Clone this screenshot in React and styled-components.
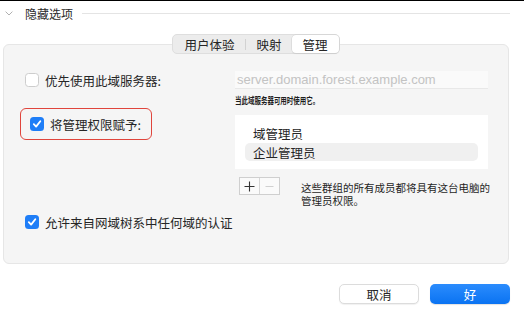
import React from "react";
import styled, { createGlobalStyle } from "styled-components";

const GlobalStyle = createGlobalStyle`
  html, body {
    margin: 0;
    padding: 0;
    background: #ffffff;
  }
  body {
    font-family: "Noto Sans CJK SC", "Liberation Sans", sans-serif;
    color: #262626;
  }
`;

const Window = styled.div`
  width: 524px;
  height: 316px;
  box-sizing: border-box;
  border-top: 1px solid #000;
  background: #fff;
  display: flex;
  flex-direction: column;
`;

const Header = styled.div`
  height: 24px;
  display: flex;
  align-items: center;
  padding: 0 14px 0 5px;
`;

const HeaderTitle = styled.span`
  font-size: 12px;
  margin-left: 12px;
  color: #2a2a2a;
`;

const HeaderRule = styled.div`
  flex: 1;
  height: 1px;
  background: #e4e4e4;
  margin-left: 9px;
`;

const TabsRow = styled.div`
  margin: 9px 15px 0 3px;
  display: flex;
  justify-content: center;
  position: relative;
  z-index: 1;
`;

const Segmented = styled.div`
  display: flex;
  align-items: center;
  height: 20px;
  box-sizing: border-box;
  background: #ececec;
  border: 1px solid #dedede;
  border-radius: 5px;
`;

const Segment = styled.div`
  height: 18px;
  display: flex;
  align-items: center;
  padding: 0 ${(p) => p.$pad || 11}px;
  font-size: 12.5px;
  border-radius: 4px;
  background: ${(p) => (p.$active ? "#fff" : "transparent")};
  box-shadow: ${(p) => (p.$active ? "0 0 0 0.5px #d0d0d0, 0 1px 1px rgba(0,0,0,0.08)" : "none")};
`;

const SegDivider = styled.div`
  width: 1px;
  height: 11px;
  background: #d2d2d2;
`;

const Panel = styled.div`
  margin: -10px 15px 0 3px;
  height: 220px;
  box-sizing: border-box;
  background: #f5f5f5;
  border: 1px solid #e6e6e6;
  border-radius: 6px;
  padding: 26px 0 0 16px;
  display: grid;
  grid-template-columns: 215px 253px;
  align-content: start;
`;

const CheckRow = styled.label`
  display: flex;
  align-items: center;
  gap: 6px;
  height: ${(p) => p.$h || 18}px;
  padding-left: 5px;
  font-size: 12.5px;
  margin-top: ${(p) => p.$mt || 0}px;
  grid-column: ${(p) => (p.$wide ? "1 / span 2" : "auto")};
`;

const Box = styled.span`
  width: 14px;
  height: 14px;
  box-sizing: border-box;
  border-radius: 3.5px;
  flex-shrink: 0;
  display: flex;
  align-items: center;
  justify-content: center;
  background: ${(p) => (p.$checked ? "#1f7ef7" : "#fff")};
  border: ${(p) => (p.$checked ? "none" : "1px solid #cdcdcd")};
`;

const Highlight = styled.div`
  margin-top: 2px;
  align-self: start;
  width: 132px;
  height: 32px;
  box-sizing: border-box;
  border: 1px solid #e0453c;
  border-radius: 6px;
  display: flex;
  align-items: center;
  padding-left: 4px;
`;

const Field = styled.div`
  height: 18px;
  box-sizing: border-box;
  background: #fafafa;
  border-bottom: 1px solid #e8e8e8;
  display: flex;
  align-items: center;
  padding-left: 2px;
  font-family: "Liberation Sans", Arial, sans-serif;
  font-size: 13px;
  color: #c3c3c3;
  white-space: nowrap;
`;

const Caption = styled.div`
  grid-column: 2;
  margin-top: 7px;
  font-size: 9px;
  line-height: 10px;
  font-weight: 700;
  color: #1e1e1e;
  white-space: nowrap;
  transform: scaleX(0.72);
  transform-origin: left center;
`;

const ListBox = styled.div`
  grid-column: 2;
  margin-top: 9px;
  height: 54px;
  box-sizing: border-box;
  background: #fff;
  padding: 9px 10px 0;
`;

const ListItem = styled.div`
  height: 18px;
  display: flex;
  align-items: center;
  padding-left: 8px;
  font-size: 12.5px;
  border-radius: 5px;
  background: ${(p) => (p.$selected ? "#f0f0f0" : "transparent")};
  margin-top: ${(p) => (p.$selected ? 1 : 0)}px;
`;

const Controls = styled.div`
  grid-column: 2;
  margin-top: 8px;
  display: flex;
  align-items: flex-start;
  padding-left: 4px;
`;

const PlusMinus = styled.div`
  display: flex;
  flex-shrink: 0;
  border: 1px solid #cfcfcf;
  height: 18px;
  box-sizing: border-box;
  background: #fafafa;
`;

const PMButton = styled.div`
  width: 19px;
  display: flex;
  align-items: center;
  justify-content: center;
  border-left: ${(p) => (p.$divider ? "1px solid #d6d6d6" : "none")};
`;

const Note = styled.div`
  margin: 5px 0 0 21px;
  font-size: 10.5px;
  line-height: 12.5px;
  color: #1e1e1e;
  white-space: nowrap;
`;

const Footer = styled.div`
  margin-top: 20px;
  display: flex;
  justify-content: flex-end;
  gap: 11px;
  padding-right: 14px;
`;

const Button = styled.button`
  width: 80px;
  height: 20px;
  border-radius: 5px;
  font-family: "Noto Sans CJK SC", sans-serif;
  font-size: 12.5px;
  padding: 0;
  display: flex;
  align-items: center;
  justify-content: center;
  border: ${(p) => (p.$primary ? "none" : "1px solid #dcdcdc")};
  background: ${(p) => (p.$primary ? "linear-gradient(#2b8cfd, #0a73f2)" : "#fff")};
  color: ${(p) => (p.$primary ? "#fff" : "#262626")};
  box-shadow: ${(p) => (p.$primary ? "0 1px 1px rgba(0,0,0,0.12)" : "0 1px 1px rgba(0,0,0,0.06)")};
`;

const Check = () => (
  <svg width="10" height="10" viewBox="0 0 10 10">
    <path d="M1.8 5.2 L4.1 7.6 L8.3 2.2" fill="none" stroke="#fff" strokeWidth="1.8" strokeLinecap="round" strokeLinejoin="round" />
  </svg>
);

const Checkbox = ({ checked }) => <Box $checked={checked}>{checked && <Check />}</Box>;

export default function App() {
  return (
    <>
      <GlobalStyle />
      <Window>
        <Header>
          <svg width="8" height="5" viewBox="0 0 8 5">
            <path d="M0.6 0.6 L4 4 L7.4 0.6" fill="none" stroke="#b0b0b0" strokeWidth="1" />
          </svg>
          <HeaderTitle>隐藏选项</HeaderTitle>
          <HeaderRule />
        </Header>

        <TabsRow>
          <Segmented>
            <Segment>用户体验</Segment>
            <SegDivider />
            <Segment $pad={10}>映射</Segment>
            <Segment $active $pad={11}>管理</Segment>
          </Segmented>
        </TabsRow>

        <Panel>
          <CheckRow>
            <Checkbox />
            优先使用此域服务器:
          </CheckRow>
          <Field>server.domain.forest.example.com</Field>

          <div />
          <Caption>当此域服务器可用时使用它。</Caption>

          <Highlight>
            <CheckRow as="div">
              <Checkbox checked />
              将管理权限赋予:
            </CheckRow>
          </Highlight>
          <ListBox>
            <ListItem>域管理员</ListItem>
            <ListItem $selected>企业管理员</ListItem>
          </ListBox>

          <div />
          <Controls>
            <PlusMinus>
              <PMButton>
                <svg width="11" height="11" viewBox="0 0 11 11">
                  <path d="M5.5 0.5 V10.5 M0.5 5.5 H10.5" stroke="#333" strokeWidth="1.1" />
                </svg>
              </PMButton>
              <PMButton $divider>
                <svg width="9" height="9" viewBox="0 0 9 9">
                  <path d="M0.5 4.5 H8.5" stroke="#d0d0d0" strokeWidth="1" />
                </svg>
              </PMButton>
            </PlusMinus>
            <Note>
              这些群组的所有成员都将具有这台电脑的
              <br />
              管理员权限。
            </Note>
          </Controls>

          <CheckRow $wide $mt={6}>
            <Checkbox checked />
            允许来自网域树系中任何域的认证
          </CheckRow>
        </Panel>

        <Footer>
          <Button>取消</Button>
          <Button $primary>好</Button>
        </Footer>
      </Window>
    </>
  );
}
